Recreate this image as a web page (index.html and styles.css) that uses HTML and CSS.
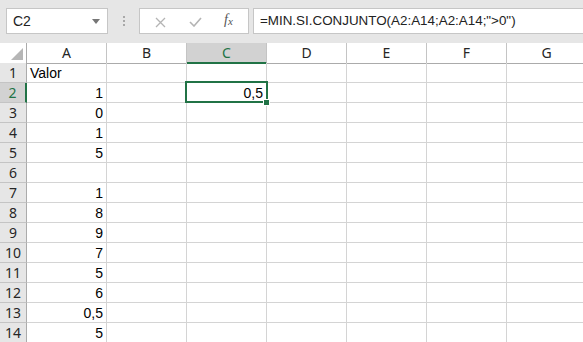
FILE: index.html
```html
<!DOCTYPE html>
<html lang="es">
<head>
    <meta charset="utf-8">
    <title>MIN.SI.CONJUNTO</title>
    <link rel="stylesheet" href="styles.css">
</head>
<body>
    <div class="toolbar">
        <div class="namebox">
            <span>C2</span>
            <svg class="arrow" width="8" height="5" viewBox="0 0 8 5"><path d="M0 0h8L4 5z" fill="#767676"/></svg>
        </div>
        <div class="dots"><i></i><i></i><i></i></div>
        <div class="fbuttons">
            <svg width="11" height="11" viewBox="0 0 11 11"><path d="M1 1l9 9M10 1l-9 9" stroke="#b4b4b4" stroke-width="1.3" fill="none"/></svg>
            <svg width="13" height="10" viewBox="0 0 13 10"><path d="M1 5l4 4 7-8" stroke="#b4b4b4" stroke-width="1.6" fill="none"/></svg>
            <span class="fx">f<sub>x</sub></span>
        </div>
        <div class="formula">=MIN.SI.CONJUNTO(A2:A14;A2:A14;"&gt;0")</div>
    </div>

    <div class="sheet">
        <div class="hd corner"><svg width="12" height="12" viewBox="0 0 12 12"><path d="M12 0v12H0z" fill="#b6b6b6"/></svg></div>
        <div class="hd">A</div>
        <div class="hd">B</div>
        <div class="hd active-col">C</div>
        <div class="hd">D</div>
        <div class="hd">E</div>
        <div class="hd">F</div>
        <div class="hd">G</div>
    </div>
    <div class="sheet" id="rows"></div>

    <script>
        const valores = ['Valor', '1', '0', '1', '5', '', '1', '8', '9', '7', '5', '6', '0,5', '5'];
        const rows = document.getElementById('rows');
        let html = '';
        for (let i = 0; i < valores.length; i++) {
            const n = i + 1;
            html += `<div class="rh${n == 2 ? ' active-row' : ''}">${n}</div>`;
            const v = valores[i];
            html += `<div class="cell${i == 0 ? ' text' : ''}">${v}</div>`;
            html += '<div class="cell"></div>';
            if (n == 2) {
                html += '<div class="cell sel">0,5<span class="handle"></span></div>';
            } else {
                html += '<div class="cell"></div>';
            }
            html += '<div class="cell"></div><div class="cell"></div><div class="cell"></div><div class="cell"></div>';
        }
        rows.innerHTML = html;
    </script>
</body>
</html>
```

FILE: styles.css
```css
body {
    margin: 0;
    width: 583px;
    height: 342px;
    overflow: hidden;
    background: #e6e6e6;
    font-family: "Liberation Sans", Arial, sans-serif;
    color: #222;
}

.toolbar {
    height: 43px;
    box-sizing: border-box;
    padding: 8px 0 0 6px;
    display: flex;
    align-items: flex-start;
}

.namebox {
    width: 102px;
    height: 26px;
    box-sizing: border-box;
    background: #fff;
    border: 1px solid #c6c6c6;
    display: flex;
    align-items: center;
    justify-content: space-between;
    padding: 0 7px 0 6px;
    font-size: 14px;
}
.namebox .arrow {
    margin-top: 1px;
}

.dots {
    width: 31px;
    height: 26px;
    display: flex;
    flex-direction: column;
    align-items: center;
    justify-content: center;
    gap: 2px;
}
.dots i {
    width: 2px;
    height: 2px;
    background: #a8a8a8;
}

.fbuttons {
    width: 110px;
    height: 26px;
    box-sizing: border-box;
    background: #fff;
    border: 1px solid #c6c6c6;
    display: flex;
    align-items: center;
    padding: 2px 0 0 15px;
    gap: 23px;
}
.fx {
    font: italic 14px "Liberation Serif", "Times New Roman", serif;
    color: #555;
    margin-top: -4px;
    margin-left: -1px;
}
.fx sub {
    font-size: 11px;
    vertical-align: -1px;
}

.formula {
    flex: 1;
    height: 26px;
    box-sizing: border-box;
    margin-left: 4px;
    background: #fff;
    border: 1px solid #c6c6c6;
    border-right: none;
    padding: 4px 0 0 6px;
    font-size: 13.4px;
    white-space: nowrap;
}

.sheet {
    display: grid;
    grid-template-columns: 27px repeat(7, 80px);
    grid-auto-rows: 20px;
    background: #fff;
}
.sheet:first-of-type {
    background: #e6e6e6;
}

.hd {
    height: 21px;
    box-sizing: border-box;
    border-right: 1px solid #c4c4c4;
    border-bottom: 1px solid #ababab;
    text-align: center;
    font: 14px/20px "Noto Sans", "Liberation Sans", sans-serif;
    color: #262626;
}
.corner {
    display: flex;
    align-items: flex-end;
    justify-content: flex-end;
    padding: 0 3px 3px 0;
    border-right-color: #ababab;
}
.active-col {
    background: #d2d2d2;
    border-bottom: 2px solid #217346;
    color: #217346;
}

.rh {
    box-sizing: border-box;
    background: #e6e6e6;
    border-right: 1px solid #ababab;
    border-bottom: 1px solid #c4c4c4;
    text-align: center;
    font: 14px/20px "Noto Sans", "Liberation Sans", sans-serif;
    color: #262626;
}
.active-row {
    background: #d2d2d2;
    border-right: 2px solid #217346;
    color: #217346;
}

.cell {
    box-sizing: border-box;
    border-right: 1px solid #d4d4d4;
    border-bottom: 1px solid #d4d4d4;
    text-align: right;
    padding: 1px 3px 0;
    font-size: 14px;
    line-height: 19px;
    color: #000;
}
.cell.text {
    text-align: left;
}

.sel {
    position: relative;
}
.sel::before {
    content: "";
    position: absolute;
    left: -2px;
    top: -2px;
    right: -2px;
    bottom: -1px;
    border: 2px solid #217346;
}
.handle {
    position: absolute;
    right: -4px;
    bottom: -4px;
    width: 5px;
    height: 5px;
    background: #217346;
    border: 1px solid #fff;
}
```
